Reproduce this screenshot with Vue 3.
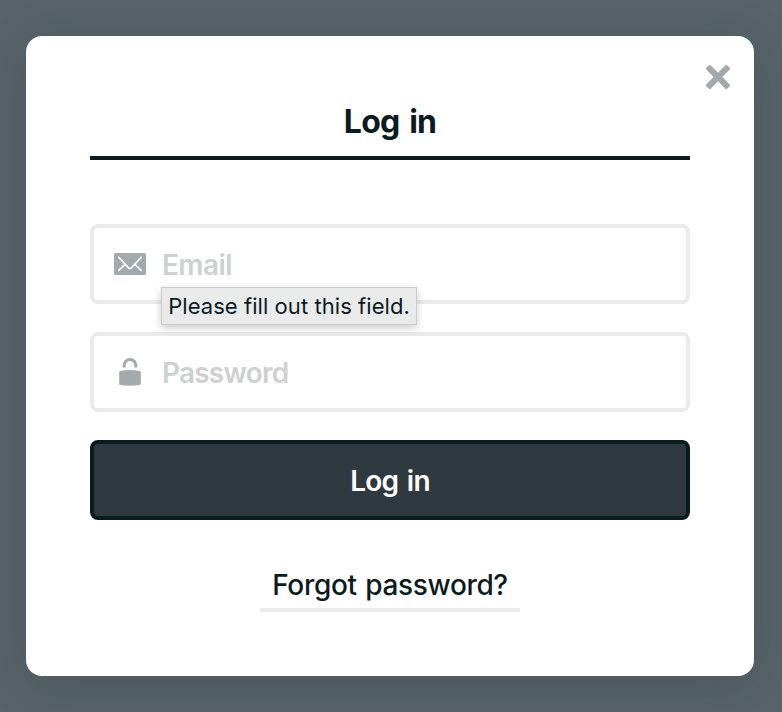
<script setup>
import { ref } from 'vue';

const email = ref('');
const password = ref('');
</script>

<template>
  <div class="overlay">
    <div class="modal">
      <button type="button" class="close" aria-label="Close">
        <svg width="26" height="26" viewBox="0 0 26 26">
          <g transform="rotate(45 13 13)">
            <rect x="-1.8" y="9.9" width="29.6" height="6.2" rx="1.6" />
            <rect x="9.9" y="-1.8" width="6.2" height="29.6" rx="1.6" />
          </g>
        </svg>
      </button>

      <h1>Log in</h1>

      <form novalidate @submit.prevent>
        <label class="field">
          <svg class="icon" width="32" height="32" viewBox="0 0 32 32">
            <rect x="0" y="5" width="32" height="22" rx="1.5" />
            <path class="line" d="M4.8 9.4L14.6 19.9Q16 21.3 17.4 19.9L27.2 9.4M4.8 22.4L11 16.2M27.2 22.4L21 16.2" />
          </svg>
          <input v-model="email" type="email" placeholder="Email" />
          <span class="tooltip">Please fill out this field.</span>
        </label>

        <label class="field">
          <svg class="icon" width="32" height="32" viewBox="0 0 32 32">
            <path d="M5.2 16Q5.2 15.1 6.2 14.9Q16 13.2 25.8 14.9Q26.8 15.1 26.8 16V28Q26.8 28.9 25.8 29.1Q16 30.6 6.2 29.1Q5.2 28.9 5.2 28Z" />
            <path class="shackle" d="M10.2 11.4V9.2A5.8 5.8 0 0 1 21.8 9.2V11.4" />
          </svg>
          <input v-model="password" class="password" type="password" placeholder="Password" />
        </label>

        <button type="submit" class="submit">Log in</button>
      </form>

      <a class="forgot" href="#">Forgot password?</a>
    </div>
  </div>
</template>

<style>
body {
  margin: 0;
  background: #58646a;
}
</style>

<style scoped>
.overlay {
  box-sizing: border-box;
  height: 712px;
  padding: 36px 28px 36px 26px;
  overflow: hidden;
  background: #58646a;
  font-family: Inter, "Liberation Sans", sans-serif;
  color: #0b1b22;
}

.modal {
  position: relative;
  box-sizing: border-box;
  display: flex;
  flex-direction: column;
  align-items: center;
  height: 640px;
  padding: 64px;
  border-radius: 16px;
  background: #fff;
  box-shadow: 0 8px 48px rgba(11, 27, 34, 0.18);
}

.close {
  position: absolute;
  top: 28px;
  right: 23px;
  width: 26px;
  height: 26px;
  padding: 0;
  border: 0;
  background: none;
}

.close svg {
  display: block;
  fill: #a3aaad;
}

h1 {
  box-sizing: border-box;
  width: 100%;
  height: 60px;
  margin: 0 0 64px;
  border-bottom: 4px solid #0b1b22;
  font-size: 32px;
  font-weight: 700;
  line-height: 43px;
  letter-spacing: -0.8px;
  word-spacing: 3px;
  text-align: center;
}

form {
  display: flex;
  flex-direction: column;
  gap: 28px;
  width: 100%;
}

.field {
  position: relative;
  box-sizing: border-box;
  display: flex;
  align-items: center;
  gap: 16px;
  height: 80px;
  padding: 0 20px;
  border: 4px solid #e9ebeb;
  border-radius: 8px;
}

.icon {
  flex: none;
  fill: #a3aaad;
}

.icon .line {
  fill: none;
  stroke: #fff;
  stroke-width: 1.6;
  stroke-linecap: round;
}

.icon .shackle {
  fill: none;
  stroke: #a3aaad;
  stroke-width: 3;
}

input {
  flex: 1;
  min-width: 0;
  height: 40px;
  padding: 2px 0 0;
  border: 0;
  outline: 0;
  background: none;
  font: 600 28px/38px Inter, "Liberation Sans", sans-serif;
  letter-spacing: -0.6px;
}

input.password {
  letter-spacing: -0.8px;
}

input::placeholder {
  color: #ced1d1;
  opacity: 1;
}

.tooltip {
  position: absolute;
  top: 59px;
  left: 67px;
  z-index: 1;
  box-sizing: border-box;
  width: 256px;
  height: 38px;
  border: 1px solid #c9cccc;
  background: #e9ebeb;
  box-shadow: 0 3px 8px rgba(0, 0, 0, 0.2);
  font-size: 22px;
  line-height: 36px;
  letter-spacing: 0.06px;
  text-align: center;
  white-space: nowrap;
}

.submit {
  box-sizing: border-box;
  height: 80px;
  padding: 2px 0 0;
  border: 4px solid #0b1b22;
  border-radius: 8px;
  background: #2e3a40;
  color: #fff;
  font: 600 28px/34px Inter, "Liberation Sans", sans-serif;
  letter-spacing: -0.7px;
  word-spacing: 2px;
}

.forgot {
  box-sizing: border-box;
  width: 260px;
  height: 48px;
  margin-top: 44px;
  border-bottom: 4px solid #e9ebeb;
  color: #0b1b22;
  font-size: 28px;
  font-weight: 500;
  line-height: 43px;
  letter-spacing: -0.35px;
  word-spacing: 1.5px;
  text-align: center;
  text-decoration: none;
  white-space: nowrap;
}
</style>
